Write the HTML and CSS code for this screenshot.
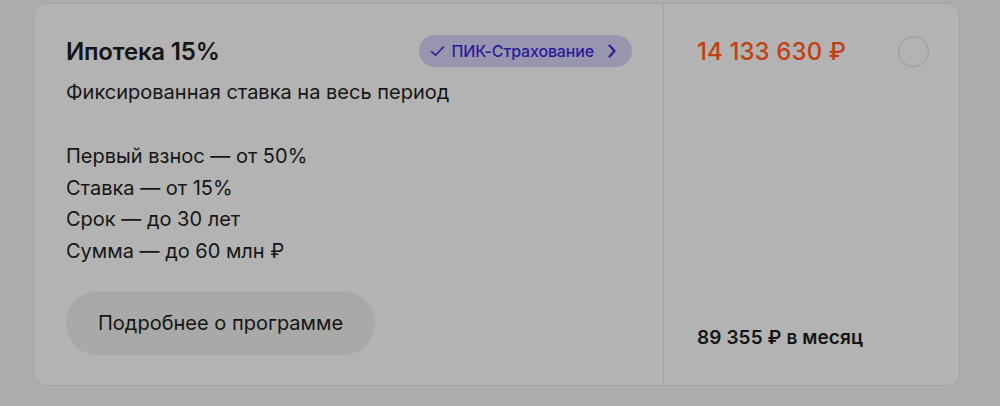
FILE: index.html
```html
<!DOCTYPE html>
<html lang="ru">
<head>
<meta charset="utf-8">
<title>Ипотека 15%</title>
<link rel="stylesheet" href="styles.css">
</head>
<body>
<div class="card">
  <div class="main">
    <div class="head">
      <h2 class="title">Ипотека 15%</h2>
      <div class="badge">
        <svg class="check" width="15" height="12" viewBox="0 0 15 12"><path d="M1.5 6.5 L5.5 10.2 L13.5 2" fill="none" stroke="currentColor" stroke-width="1.6" stroke-linecap="round" stroke-linejoin="round"/></svg>
        <span>ПИК-Страхование</span>
        <svg class="chev" width="10" height="14" viewBox="0 0 10 14"><path d="M2.5 1.5 L7.5 7 L2.5 12.5" fill="none" stroke="currentColor" stroke-width="2.2" stroke-linecap="round" stroke-linejoin="round"/></svg>
      </div>
    </div>
    <p class="sub">Фиксированная ставка на весь период</p>
    <ul class="terms">
      <li>Первый взнос — от 50%</li>
      <li>Ставка — от 15%</li>
      <li>Срок — до 30 лет</li>
      <li>Сумма — до 60 млн ₽</li>
    </ul>
    <button class="more">Подробнее о программе</button>
  </div>
  <div class="side">
    <div class="side-head">
      <div class="price">14 133 630 ₽</div>
      <span class="radio"></span>
    </div>
    <div class="monthly">89 355 ₽ в месяц</div>
  </div>
</div>
</body>
</html>
```
FILE: styles.css
```css
html, body {
  margin: 0;
  padding: 0;
  background: #adadad;
  font-family: Inter, "Noto Sans", sans-serif;
  color: #151515;
}
.card {
  margin: 3px 0 0 33px;
  width: 927px;
  height: 383px;
  box-sizing: border-box;
  background: #b3b3b3;
  border: 1px solid #a2a2a2;
  border-radius: 12px;
  display: grid;
  grid-template-columns: 629px 1fr;
}
.main {
  padding: 31px 31px 30px 32px;
  display: flex;
  flex-direction: column;
  align-items: flex-start;
}
.head {
  align-self: stretch;
  display: flex;
  justify-content: space-between;
  align-items: center;
  height: 32px;
}
.title {
  margin: 0;
  font-size: 24px;
  font-weight: 600;
  letter-spacing: -0.2px;
}
.badge {
  display: flex;
  align-items: center;
  gap: 7px;
  height: 32px;
  padding: 0 15px 0 11px;
  border-radius: 16px;
  background: #9896ae;
  color: #2a1a9c;
  font-size: 16px;
  font-weight: 500;
  letter-spacing: -0.15px;
}
.badge .chev { margin-left: 6px; }
.sub {
  margin: 12px 0 0;
  font-size: 20px;
  line-height: 26px;
}
.terms {
  list-style: none;
  margin: 36px 0 0;
  padding: 0;
  font-size: 20px;
  line-height: 31.5px;
}
.more {
  margin-top: auto;
  height: 64px;
  padding: 0 32px;
  border: none;
  border-radius: 32px;
  background: #a9a9a7;
  color: #151515;
  font-family: inherit;
  font-size: 20px;
}
.side {
  border-left: 1px solid #a2a2a2;
  padding: 31px 30px 36px 33px;
  display: flex;
  flex-direction: column;
  justify-content: space-between;
}
.side-head {
  display: flex;
  justify-content: space-between;
  align-items: center;
  height: 32px;
}
.price {
  font-size: 24px;
  font-weight: 500;
  color: #c2400f;
  letter-spacing: 0.1px;
}
.radio {
  width: 31px;
  height: 31px;
  box-sizing: border-box;
  border: 1px solid #9a9a9a;
  border-radius: 50%;
}
.monthly {
  font-size: 19px;
  font-weight: 600;
  letter-spacing: 0.1px;
}
```
